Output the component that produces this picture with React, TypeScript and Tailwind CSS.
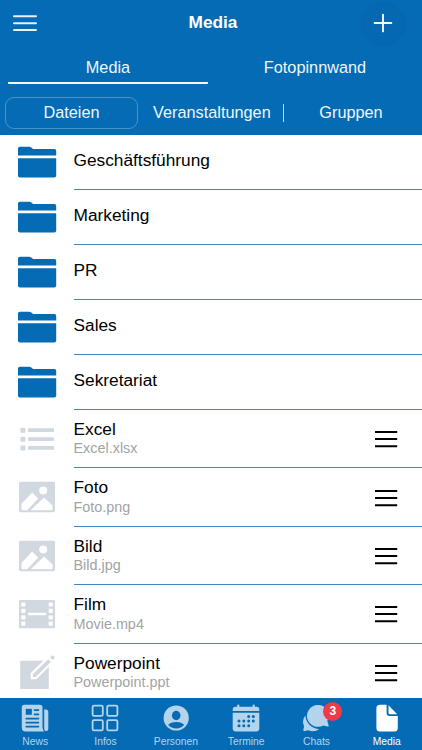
import React, { useState } from 'react';
import clsx from 'clsx';

const FOLDERS = ['Geschäftsführung', 'Marketing', 'PR', 'Sales', 'Sekretariat'];

const FILES = [
  { title: 'Excel',      name: 'Excel.xlsx',     icon: ListIcon,  height: 'h-[58px]', gap: '',       menu: 'pt-[19px]' },
  { title: 'Foto',       name: 'Foto.png',       icon: ImageIcon, height: 'h-[59px]', gap: 'pt-px',  menu: 'pt-5' },
  { title: 'Bild',       name: 'Bild.jpg',       icon: ImageIcon, height: 'h-[58px]', gap: '',       menu: 'pt-[19px]' },
  { title: 'Film',       name: 'Movie.mp4',      icon: FilmIcon,  height: 'h-[59px]', gap: 'pt-px',  menu: 'pt-[19px]' },
  { title: 'Powerpoint', name: 'Powerpoint.ppt', icon: EditIcon,  height: 'h-[59px]', gap: '',       menu: 'pt-[19px]' },
];

const TABS = [
  { label: 'News',     icon: NewsIcon },
  { label: 'Infos',    icon: GridIcon },
  { label: 'Personen', icon: PersonIcon },
  { label: 'Termine',  icon: CalendarIcon },
  { label: 'Chats',    icon: ChatsIcon, badge: 3 },
  { label: 'Media',    icon: DocumentIcon },
];

/* ── List icons (40 x 40) ─────────────────────────────────────────── */
function FolderIcon() {
  return (
    <svg width="40" height="40" viewBox="0 0 40 40" fill="#046bb4">
      <path d="M1 13.5V6.6Q1 4.7 2.9 4.7H12.2Q13.4 4.7 14.3 5.5L15.8 6.7Q16.3 7.1 17 7.1H37.4Q39.2 7.1 39.2 8.9V13.5Z" />
      <path d="M1 16.2H39.2V33.6Q39.2 35.5 37.3 35.5H2.9Q1 35.5 1 33.6Z" />
    </svg>
  );
}

function ListIcon() {
  return (
    <svg width="40" height="40" viewBox="0 0 40 40" fill="#d1d8df">
      {[8.8, 17.7, 26.5].map((y) => (
        <g key={y}>
          <rect x="3.4" y={y} width="5" height="5" rx="1" />
          <rect x="11" y={y + 0.5} width="26" height="3.8" rx="0.7" />
        </g>
      ))}
    </svg>
  );
}

function ImageIcon() {
  return (
    <svg width="40" height="40" viewBox="0 0 40 40">
      <rect x="2" y="4.7" width="36" height="30.5" rx="1.6" fill="#d1d8df" />
      <circle cx="26.2" cy="13.6" r="4" fill="#fff" />
      <path d="M4.5 26.8L15.2 15.6L21.2 21.6L10.2 33.2H5.5Q4.5 33.2 4.5 32.2Z" fill="#fff" />
      <path d="M13.6 33.2L27.1 20.6L35.6 28.6V32.2Q35.6 33.2 34.6 33.2Z" fill="#fff" />
    </svg>
  );
}

function FilmIcon() {
  return (
    <svg width="40" height="40" viewBox="0 0 40 40">
      <rect x="2" y="6" width="36" height="28.2" rx="0.8" fill="#d1d8df" />
      <g fill="#fff">
        {[8.4, 14.8, 21.2, 27.6].map((y) => (
          <g key={y}>
            <rect x="4.2" y={y} width="4.2" height="4.2" rx="1" />
            <rect x="31.6" y={y} width="4.2" height="4.2" rx="1" />
          </g>
        ))}
        <rect x="11" y="18.8" width="18.2" height="2.4" rx="1" />
      </g>
    </svg>
  );
}

function EditIcon() {
  return (
    <svg width="40" height="40" viewBox="0 0 40 40">
      <rect x="3.2" y="7.8" width="28.6" height="28.2" rx="0.8" fill="#d1d8df" />
      <path d="M14.8 20.6L31.2 4.6L35.4 8.8L19 25.2H14.8Z" fill="#d1d8df" stroke="#fff" strokeWidth="2.2" />
      <path d="M33 4.6L34.4 3Q35.7 1.8 37 3Q38.3 4.3 37.1 5.7L35.4 7.1Z" fill="#d1d8df" />
    </svg>
  );
}

/* ── Tab icons (28 x 28) ──────────────────────────────────────────── */
function NewsIcon() {
  return (
    <svg width="28" height="28" viewBox="0 0 28 28">
      <path d="M3.3.7H18.7Q21.5.7 21.5 3.5V23.5Q21.5 26 23.4 27.4H4.5Q.8 27.4.8 23.8V3.5Q.8.7 3.3.7Z" fill="currentColor" />
      <path d="M23.2 5.4H24.8Q27.3 5.4 27.3 8V24.2Q27.3 27 25.2 27Q23.2 27 23.2 24.2Z" fill="currentColor" />
      <g stroke="#046bb4" strokeWidth="1.7" strokeLinecap="round" fill="none">
        <rect x="5.6" y="5.7" width="4.4" height="4.2" fill="#046bb4" />
        <path d="M13.6 6.1H17.4M13.6 10.4H17.4M5.3 14.6H17.4M5.3 18.6H17.4M5.3 22.6H17.4" />
      </g>
    </svg>
  );
}

function GridIcon() {
  return (
    <svg width="28" height="28" viewBox="0 0 28 28" fill="none" stroke="currentColor" strokeWidth="1.8">
      <rect x="1.6" y="1.6" width="10.2" height="10.2" rx="1.4" />
      <rect x="16.2" y="1.6" width="10.2" height="10.2" rx="1.4" />
      <rect x="1.6" y="16.2" width="10.2" height="10.2" rx="1.4" />
      <rect x="16.2" y="16.2" width="10.2" height="10.2" rx="1.4" />
    </svg>
  );
}

function PersonIcon() {
  return (
    <svg width="28" height="28" viewBox="0 0 28 28">
      <circle cx="14.2" cy="14" r="12.6" fill="currentColor" />
      <ellipse cx="14.2" cy="11.5" rx="4.3" ry="4.7" fill="#046bb4" />
      <path d="M6.2 20.8Q8.6 17.9 14.2 17.9T22.2 20.8Q19 24.6 14.2 24.6T6.2 20.8Z" fill="#046bb4" />
    </svg>
  );
}

function CalendarIcon() {
  return (
    <svg width="28" height="28" viewBox="0 0 28 28">
      <path d="M.7 7V5.5Q.7 2.8 3.6 2.8H5.2V1.7Q5.2.6 6.3.6T7.4 1.7V2.8H20.6V1.7Q20.6.6 21.7.6T22.8 1.7V2.8H24.4Q27.3 2.8 27.3 5.5V7Z" fill="currentColor" />
      <path d="M.7 8.8H27.3V24.2Q27.3 27.4 24.1 27.4H3.9Q.7 27.4.7 24.2Z" fill="currentColor" />
      <g fill="#046bb4">
        {[[16.7, 12.5], [21.3, 12.5], [7, 17.1], [11.8, 17.1], [16.7, 17.1], [21.3, 17.1], [7, 21.7], [11.8, 21.7], [16.7, 21.7]].map(([x, y]) => (
          <circle key={`${x}-${y}`} cx={x} cy={y} r="1.5" />
        ))}
      </g>
    </svg>
  );
}

function ChatsIcon() {
  return (
    <svg width="28" height="28" viewBox="0 0 28 28" fill="currentColor">
      <path d="M3.6 11.6Q1 13.9 1 17.5Q1 20 2.1 22.2L1.3 26Q1.3 27.4 2.7 27.1L6.3 26.2Q8.7 27.4 11 27.3Q14.6 27.2 17.2 25Q11.5 24.7 7.4 20.7Q3.4 16.6 3.6 11.6Z" />
      <path d="M15.6 1A10.7 10.7 0 0 1 25.3 17L26.6 21.2Q26.9 22.8 25.4 22.6L21.2 21.4A10.9 10.9 0 1 1 15.6 1Z" />
    </svg>
  );
}

function DocumentIcon() {
  return (
    <svg width="28" height="28" viewBox="0 0 28 28" fill="currentColor">
      <path d="M7 .7H13.6V8.8Q13.6 12 16.6 12H24.8V23.9Q24.8 27.4 21.3 27.4H7Q3.4 27.4 3.4 23.9V4.2Q3.4.7 7 .7Z" />
      <path d="M15.5 1.3L24.2 10.3H16.8Q15.5 10.3 15.5 9Z" />
    </svg>
  );
}

export default function App() {
  const [active, setActive] = useState('Media');

  return (
    <div className="flex flex-col w-full h-[750px] overflow-hidden bg-white font-['Liberation_Sans',Arial,sans-serif]">
      {/* ── Header ──────────────────────────────────────────────────── */}
      <header className="h-[135px] shrink-0 bg-[#046bb4] text-[#eef7fd]">
        <div className="grid grid-cols-[60px_1fr_60px] items-center h-[46px]">
          <button className="ml-[13px] w-6">
            <svg width="24" height="20" viewBox="0 0 24 20" stroke="#e3f2fc" strokeWidth="2" strokeLinecap="round">
              <path d="M1 3.2H23M1 10.2H23M1 17H23" />
            </svg>
          </button>
          <h1 className="text-center text-[17.3px] leading-5 pb-0.5 ml-1 font-bold text-white">Media</h1>
          <button className="ml-px size-10 rounded-full bg-[#0568b0] flex items-center justify-center shadow-[0_1px_4px_rgba(0,40,90,0.06)]">
            <svg width="20" height="20" viewBox="0 0 20 20" stroke="#fff" strokeWidth="1.8" strokeLinecap="round">
              <path d="M10 1.6V18.4M1.6 10H18.4" />
            </svg>
          </button>
        </div>

        <div className="grid grid-cols-2 h-[38px] px-2 text-[16.3px]">
          <div className="flex items-center justify-center pt-1.5 border-b-2 border-[#f1f8fd] mr-[3px] rounded-[1px]">Media</div>
          <div className="flex items-center justify-center pt-1 ml-[5px]">Fotopinnwand</div>
        </div>

        <div className="flex items-center h-8 mt-[13px] pl-[5px] text-[16.3px]">
          <div className="w-[133px] h-8 -mt-px flex items-center justify-center rounded-[9px] border-[1.5px] border-[#4793cc]">Dateien</div>
          <div className="w-[145px] pl-[15px] -mt-px">Veranstaltungen</div>
          <div className="w-px h-[18px] -mt-px bg-[#bcdcf2]" />
          <div className="flex-1 text-center pr-1 -mt-px">Gruppen</div>
        </div>
      </header>

      {/* ── Files and folders ───────────────────────────────────────── */}
      <main className="flex-1 min-h-0 overflow-hidden text-black">
        {FOLDERS.map((name) => (
          <div key={name} className="flex h-[55px]">
            <div className="w-[73.5px] shrink-0 pl-[17px] pt-[7px]"><FolderIcon /></div>
            <div className="flex-1 border-b border-[#3e89c1] pt-[15px] text-[17.3px] leading-5">{name}</div>
          </div>
        ))}
        {FILES.map(({ title, name, icon: Icon, height, gap, menu }) => (
          <div key={title} className={clsx('flex', height)}>
            <div className="w-[73.5px] shrink-0 pl-[17px] pt-[9px]"><Icon /></div>
            <div className="flex-1 flex justify-between border-b border-[#3e89c1]">
              <div className="pt-[9px]">
                <p className="text-[17.3px] leading-5">{title}</p>
                <p className={clsx('text-[14.4px] leading-[18px] text-[#a3a3a3]', gap)}>{name}</p>
              </div>
              <button className={clsx('self-start mr-6', menu)}>
                <svg width="24" height="20" viewBox="0 0 24 20" stroke="#000" strokeWidth="2">
                  <path d="M1 3H23.2M1 10.1H23.2M1 17.3H23.2" />
                </svg>
              </button>
            </div>
          </div>
        ))}
      </main>

      {/* ── Tab bar ─────────────────────────────────────────────────── */}
      <nav className="grid grid-cols-6 h-[52px] shrink-0 bg-[#046bb4]">
        {TABS.map(({ label, icon: Icon, badge }) => (
          <button
            key={label}
            onClick={() => setActive(label)}
            className={clsx(
              'relative flex flex-col items-center pt-1.5',
              active === label ? 'text-white' : 'text-[#b4d4eb]',
            )}
          >
            <Icon />
            <span className="mt-0.5 text-[10.3px] leading-4">{label}</span>
            {badge && (
              <span className="absolute left-[42px] top-[4px] size-[19px] rounded-full bg-[#ed3c48] text-white text-[12px] leading-[19px] font-bold">
                {badge}
              </span>
            )}
          </button>
        ))}
      </nav>
    </div>
  );
}
